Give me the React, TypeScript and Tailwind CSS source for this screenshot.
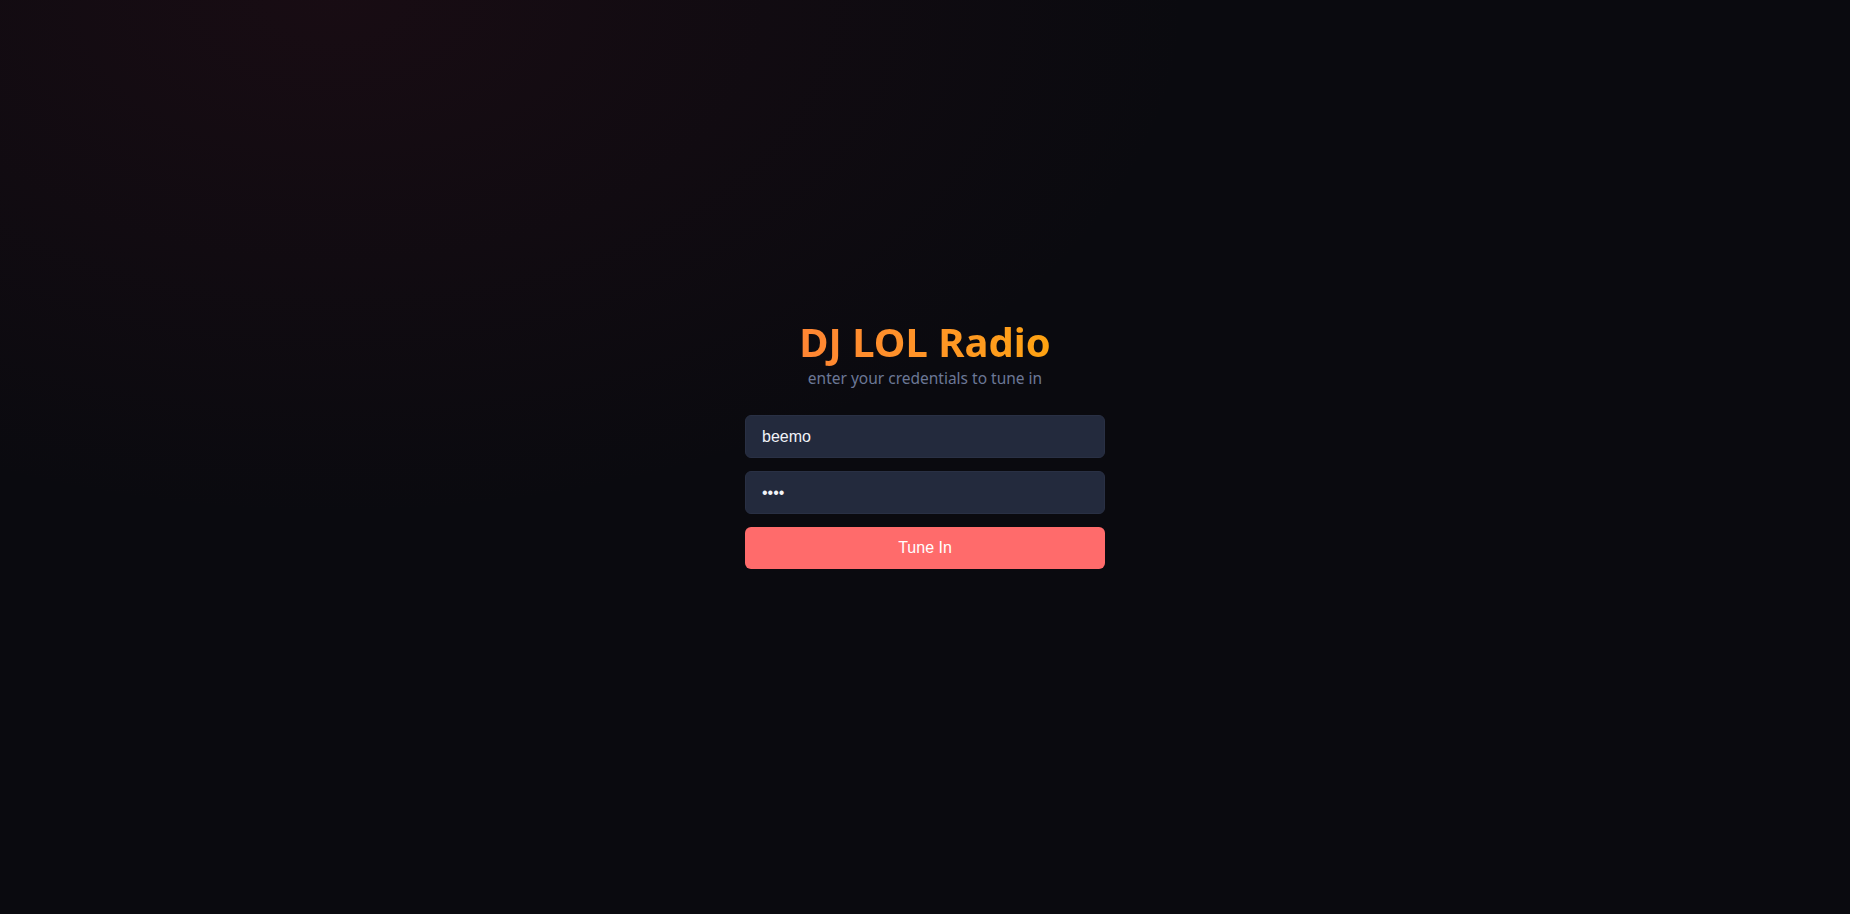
export default function App() {
  return (
    <div className="min-h-screen w-full bg-[#0a0a0f] bg-[radial-gradient(ellipse_at_18%_0%,rgba(110,25,45,0.14),transparent_40%)] font-['Liberation_Sans',Arial,sans-serif]">
      <div className="flex flex-col items-center pt-[318px]">
        {/* 제목 */}
        <h1 className="text-[40px] leading-[48px] font-bold font-['Noto_Sans','Open_Sans',sans-serif] bg-linear-to-r from-[#ff8533] to-[#ffa310] bg-clip-text text-transparent">
          DJ LOL Radio
        </h1>
        <p className="mt-[2px] text-[15.5px] leading-[20px] text-[#6c7896] font-['Noto_Sans','Open_Sans',sans-serif]">
          enter your credentials to tune in
        </p>

        {/* 입력 */}
        <form
          className="mt-[27px] w-[360px] flex flex-col gap-[13px]"
          onSubmit={(e) => e.preventDefault()}
        >
          <input
            type="text"
            defaultValue="beemo"
            className="h-[43px] w-full rounded-md border border-[#293044] bg-[#232a3d] px-4 text-base text-[#f1f3f8] outline-none"
          />
          <input
            type="password"
            defaultValue="beem"
            className="h-[43px] w-full rounded-md border border-[#293044] bg-[#232a3d] px-4 text-base text-[#f1f3f8] outline-none"
          />
          <button
            type="submit"
            className="h-[42px] w-full rounded-md bg-[#ff6b6b] text-base text-white"
          >
            Tune In
          </button>
        </form>
      </div>
    </div>
  );
}
